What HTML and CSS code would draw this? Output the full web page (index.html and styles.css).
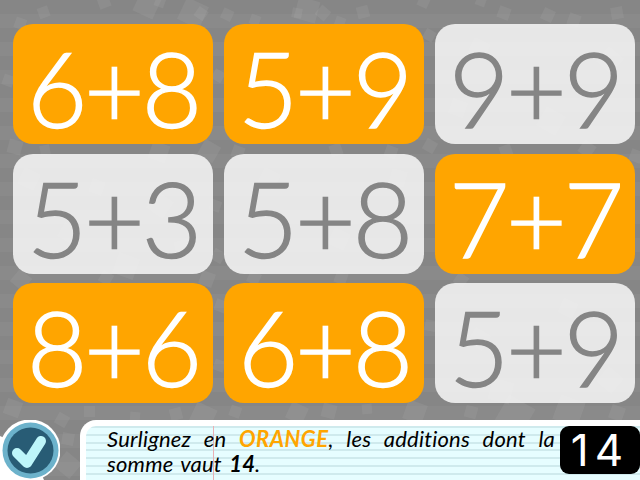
FILE: index.html
```html
<!DOCTYPE html>
<html lang="fr">
<head>
<meta charset="utf-8">
<title>Additions</title>
<link rel="stylesheet" href="styles.css">
</head>
<body>
<div class="page">
  <svg class="confetti" width="640" height="480" viewBox="0 0 640 480" aria-hidden="true">
    <g fill="#fff" fill-opacity=".06">
      <rect x="38" y="7" width="11" height="11" transform="rotate(-20 43 12)"/>
      <rect x="15" y="18" width="11" height="11" transform="rotate(20 20 23)"/>
      <rect x="98" y="-4" width="12" height="12" transform="rotate(-20 104 2)"/>
      <rect x="136" y="-6" width="22" height="22" transform="rotate(25 147 5)"/>
      <rect x="181" y="1" width="24" height="24" transform="rotate(25 193 13)"/>
      <rect x="155" y="-3" width="10" height="10" transform="rotate(20 160 2)"/>
      <rect x="222" y="9" width="11" height="11" transform="rotate(25 227 14)"/>
      <rect x="196" y="8" width="11" height="11" transform="rotate(35 201 13)"/>
      <rect x="250" y="15" width="10" height="10" transform="rotate(20 255 20)"/>
      <rect x="296" y="-1" width="22" height="22" transform="rotate(15 307 10)"/>
      <rect x="292" y="8" width="10" height="10" transform="rotate(10 297 13)"/>
      <rect x="317" y="7" width="12" height="12" transform="rotate(40 323 13)"/>
      <rect x="357" y="6" width="12" height="12" transform="rotate(-15 363 12)"/>
      <rect x="335" y="17" width="10" height="10" transform="rotate(20 340 22)"/>
      <rect x="418" y="-4" width="11" height="11" transform="rotate(25 423 2)"/>
      <rect x="476" y="-4" width="10" height="10" transform="rotate(20 481 1)"/>
      <rect x="498" y="7" width="12" height="12" transform="rotate(20 504 13)"/>
      <rect x="542" y="9" width="12" height="12" transform="rotate(25 548 15)"/>
      <rect x="568" y="14" width="12" height="12" transform="rotate(20 574 20)"/>
      <rect x="611" y="7" width="12" height="12" transform="rotate(-10 617 13)"/>
      <rect x="3" y="75" width="11" height="11" transform="rotate(20 8 80)"/>
      <rect x="213" y="70" width="11" height="11" transform="rotate(30 218 75)"/>
      <rect x="424" y="30" width="11" height="11" transform="rotate(30 430 35)"/>
      <rect x="8" y="140" width="14" height="14" transform="rotate(15 15 147)"/>
      <rect x="40" y="145" width="10" height="10" transform="rotate(-10 45 150)"/>
      <rect x="150" y="143" width="18" height="18" transform="rotate(20 159 152)"/>
      <rect x="200" y="142" width="18" height="18" transform="rotate(30 209 151)"/>
      <rect x="232" y="146" width="12" height="12" transform="rotate(20 238 152)"/>
      <rect x="330" y="144" width="12" height="12" transform="rotate(-20 336 150)"/>
      <rect x="385" y="146" width="12" height="12" transform="rotate(20 391 152)"/>
      <rect x="424" y="140" width="12" height="12" transform="rotate(30 430 146)"/>
      <rect x="500" y="145" width="12" height="12" transform="rotate(-20 506 151)"/>
      <rect x="580" y="142" width="14" height="14" transform="rotate(35 587 149)"/>
      <rect x="20" y="170" width="18" height="18" transform="rotate(25 29 179)"/>
      <rect x="90" y="180" width="14" height="14" transform="rotate(20 97 187)"/>
      <rect x="150" y="195" width="20" height="20" transform="rotate(35 160 205)"/>
      <rect x="60" y="225" width="16" height="16" transform="rotate(30 68 233)"/>
      <rect x="115" y="255" width="22" height="22" transform="rotate(20 126 266)"/>
      <rect x="175" y="240" width="16" height="16" transform="rotate(-15 183 248)"/>
      <rect x="210" y="200" width="11" height="11" transform="rotate(20 215 205)"/>
      <rect x="212" y="250" width="12" height="12" transform="rotate(30 218 256)"/>
      <rect x="260" y="170" width="18" height="18" transform="rotate(25 269 179)"/>
      <rect x="330" y="230" width="18" height="18" transform="rotate(25 339 239)"/>
      <rect x="390" y="170" width="16" height="16" transform="rotate(15 398 178)"/>
      <rect x="470" y="40" width="18" height="18" transform="rotate(25 479 49)"/>
      <rect x="540" y="110" width="22" height="22" transform="rotate(30 551 121)"/>
      <rect x="600" y="50" width="20" height="20" transform="rotate(40 610 60)"/>
      <rect x="450" y="100" width="16" height="16" transform="rotate(20 458 108)"/>
      <rect x="630" y="150" width="12" height="12" transform="rotate(20 636 156)"/>
      <rect x="13" y="272" width="16" height="16" transform="rotate(40 21 280)"/>
      <rect x="100" y="272" width="12" height="12" transform="rotate(30 106 278)"/>
      <rect x="200" y="272" width="14" height="14" transform="rotate(20 207 279)"/>
      <rect x="248" y="272" width="12" height="12" transform="rotate(25 254 278)"/>
      <rect x="335" y="272" width="12" height="12" transform="rotate(20 341 278)"/>
      <rect x="455" y="274" width="12" height="12" transform="rotate(35 461 280)"/>
      <rect x="470" y="330" width="18" height="18" transform="rotate(30 479 339)"/>
      <rect x="560" y="300" width="16" height="16" transform="rotate(25 568 308)"/>
      <rect x="600" y="370" width="20" height="20" transform="rotate(40 610 380)"/>
      <rect x="490" y="380" width="22" height="22" transform="rotate(15 501 391)"/>
      <rect x="215" y="300" width="12" height="12" transform="rotate(20 221 306)"/>
      <rect x="214" y="360" width="11" height="11" transform="rotate(20 219 365)"/>
      <rect x="425" y="320" width="11" height="11" transform="rotate(10 430 325)"/>
      <rect x="5" y="400" width="16" height="16" transform="rotate(20 13 408)"/>
      <rect x="56" y="414" width="12" height="12" transform="rotate(30 62 420)"/>
      <rect x="84" y="406" width="11" height="11" transform="rotate(0 89 411)"/>
      <rect x="130" y="412" width="10" height="10" transform="rotate(5 135 417)"/>
      <rect x="170" y="408" width="12" height="12" transform="rotate(-15 176 414)"/>
      <rect x="192" y="405" width="22" height="22" transform="rotate(25 203 416)"/>
      <rect x="230" y="406" width="11" height="11" transform="rotate(20 235 411)"/>
      <rect x="288" y="404" width="18" height="18" transform="rotate(25 297 413)"/>
      <rect x="322" y="404" width="14" height="14" transform="rotate(15 329 411)"/>
      <rect x="362" y="404" width="10" height="10" transform="rotate(-5 367 409)"/>
      <rect x="405" y="402" width="20" height="20" transform="rotate(20 415 412)"/>
      <rect x="465" y="406" width="12" height="12" transform="rotate(15 471 412)"/>
      <rect x="500" y="400" width="30" height="30" transform="rotate(30 515 415)"/>
      <rect x="556" y="398" width="26" height="26" transform="rotate(20 569 411)"/>
      <rect x="610" y="406" width="14" height="14" transform="rotate(20 617 413)"/>
      <rect x="62" y="433" width="12" height="12" transform="rotate(10 68 439)"/>
      <rect x="58" y="455" width="20" height="20" transform="rotate(40 68 465)"/>
    </g>
  </svg>

  <main class="board">
    <div class="card on">6+8</div>
    <div class="card on">5+9</div>
    <div class="card">9+9</div>
    <div class="card">5+3</div>
    <div class="card">5+8</div>
    <div class="card on">7+7</div>
    <div class="card on">8+6</div>
    <div class="card on">6+8</div>
    <div class="card">5+9</div>
  </main>

  <footer class="footer">
    <svg class="check" width="60" height="60" viewBox="0 0 60 60" aria-hidden="true">
      <path d="M0 16 0 60 44 60 30 30Z" fill="#fff"/>
      <circle cx="30" cy="30" r="30.5" fill="#fff"/>
      <circle cx="30.5" cy="30.5" r="28" fill="#6cb2cb"/>
      <circle cx="30.5" cy="30.5" r="23" fill="#285c75"/>
      <path d="M17 33 27 43 41 21" fill="none" stroke="#bdf6fa" stroke-width="10" stroke-linejoin="round" stroke-linecap="round"/>
    </svg>
    <section class="note">
      <div class="margin-line"></div>
      <p class="order">Surlignez en <span class="orange">ORANGE</span>, les additions dont la somme vaut <b>14</b>.</p>
      <div class="target">14</div>
    </section>
  </footer>
</div>
</body>
</html>
```
FILE: styles.css
```css
* { box-sizing: border-box; }
html, body { margin: 0; padding: 0; }
body { width: 640px; height: 480px; overflow: hidden; }

.page {
  position: relative;
  width: 640px;
  height: 480px;
  display: flex;
  flex-direction: column;
  background: repeating-linear-gradient(180deg, #868686 0 14px, #8a8a8a 14px 28px);
}
.confetti { position: absolute; left: 0; top: 0; }

.board {
  position: relative;
  display: grid;
  grid-template-columns: repeat(3, 200px);
  grid-template-rows: repeat(3, 120px);
  column-gap: 11px;
  row-gap: 9.5px;
  padding: 24px 0 0 13px;
}
.card {
  display: flex;
  align-items: center;
  justify-content: center;
  padding-top: 8px;
  border-radius: 20px;
  background: rgba(255, 255, 255, .8);
  color: #858585;
  font-family: "Lato", sans-serif;
  font-weight: 300;
  font-size: 104px;
  line-height: 112px;
  letter-spacing: -3px;
  -webkit-text-stroke: 1.5px currentColor;
}
.card.on { background: #ffa500; color: #fff; }

.footer {
  position: relative;
  display: flex;
  margin-top: 16.5px;
  height: 60px;
}
.check { flex: none; }
.note {
  position: relative;
  flex: 1;
  margin-left: 20px;
  display: flex;
  align-items: flex-start;
  padding-left: 21px;
  border-left: 6px solid #fff;
  border-top: 6px solid #fff;
  border-top-left-radius: 16px;
  background: #e6fdff repeating-linear-gradient(180deg, #cfeaed 0 2px, #e6fdff 2px 7.75px);
}
.margin-line {
  position: absolute;
  left: 127px;
  top: 0;
  bottom: 0;
  width: 1px;
  background: #eab0b4;
}
.order {
  position: relative;
  width: 448px;
  margin: 0;
  font: italic 400 22px/25px "Lato", sans-serif;
  letter-spacing: .2px;
  word-spacing: 2px;
  color: #000;
  text-align: justify;
}
.orange { color: #ffa500; font-weight: 700; letter-spacing: .5px; }
.target {
  flex: none;
  width: 80px;
  height: 48px;
  margin-left: 5px;
  border-radius: 9px;
  background: #000;
  color: #fff;
  font: 400 44px/48px "Inter", sans-serif;
  letter-spacing: 6px;
  text-align: center;
}
```
